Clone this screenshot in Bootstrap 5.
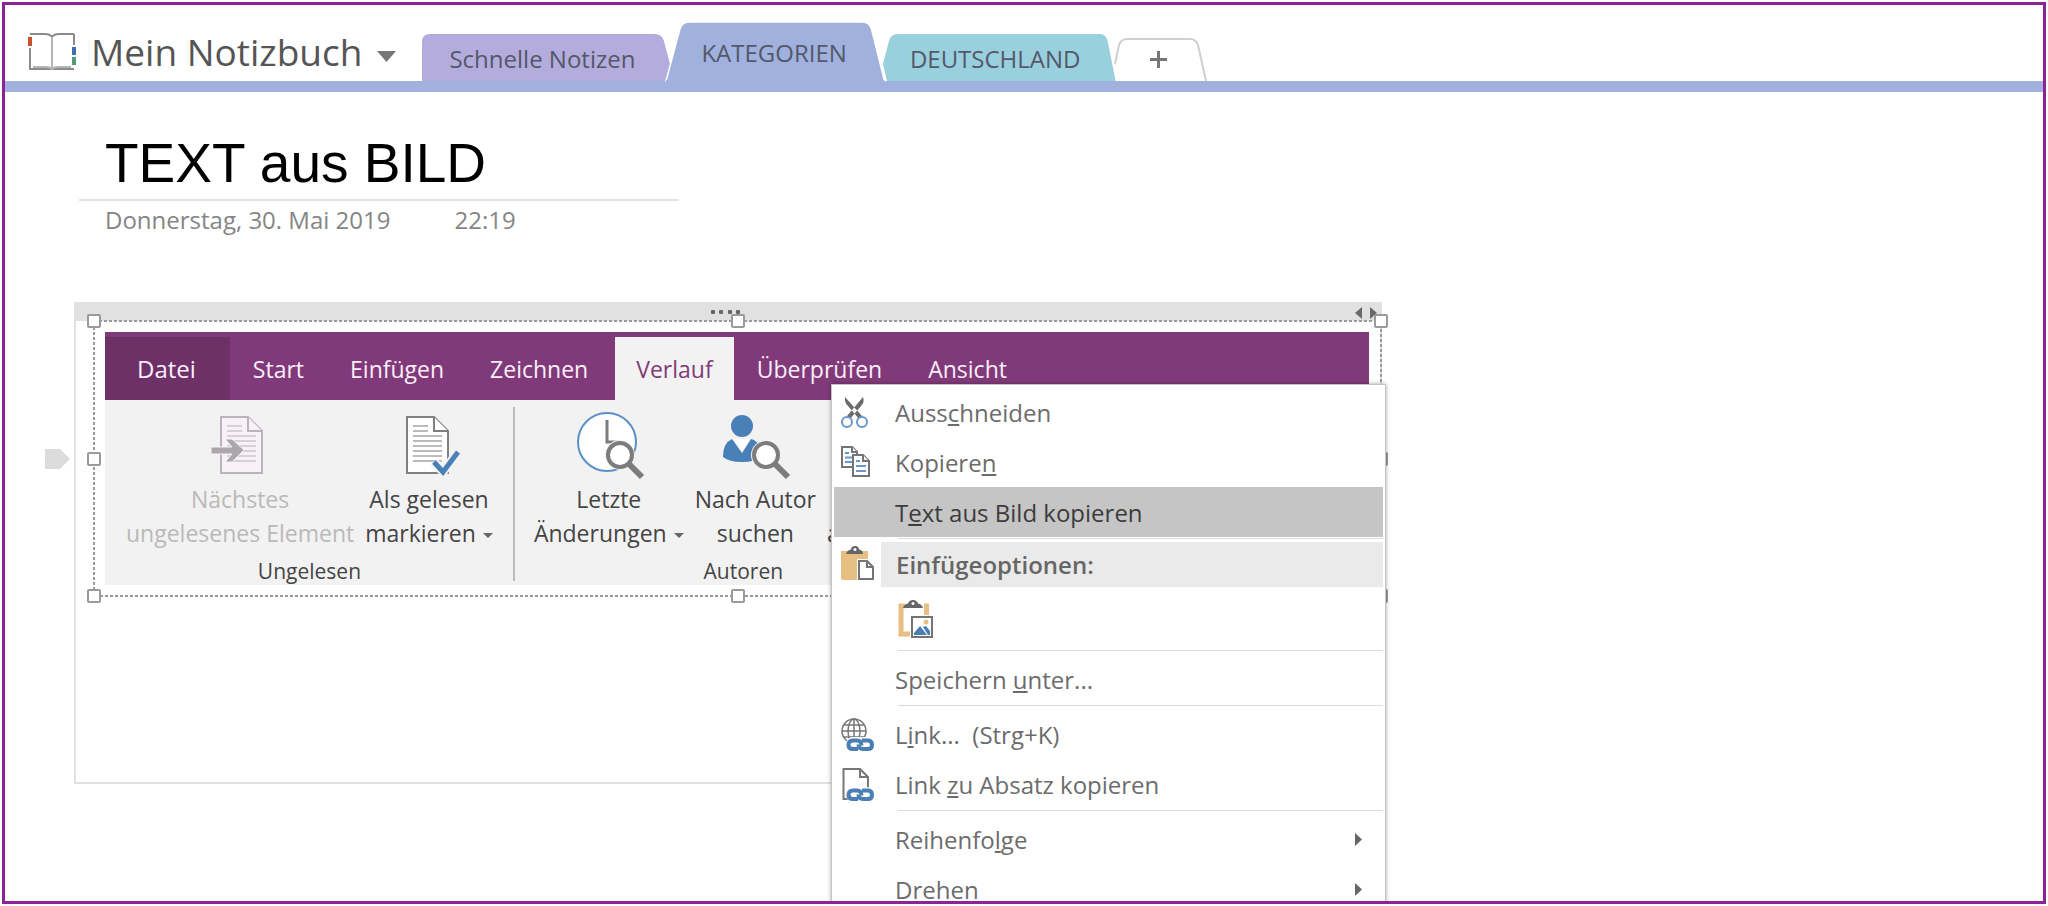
<!DOCTYPE html>
<html lang="de">
<head>
<meta charset="utf-8">
<meta name="viewport" content="width=device-width, initial-scale=1">
<title>Mein Notizbuch</title>
<link href="https://cdn.jsdelivr.net/npm/bootstrap@5.3.0/dist/css/bootstrap.min.css" rel="stylesheet">
<style>
body{background:#fff;font-family:"Open Sans","Noto Sans",sans-serif;font-size:24px;line-height:34px;color:#6a6a6a}
button{font:inherit;color:inherit;background:none;border:0;padding:0}
svg{display:block;overflow:visible}
.app-frame{height:calc(100vh - 4px);margin:2px;border:3px solid #8b2399;overflow:hidden}
.section-bar{height:87px;border-bottom:11px solid #a0b1de;padding-left:23px}
.notebook{height:58px;font-size:37px;color:#555;gap:15px}
.notebook .arrow{margin-top:8px}
.sections{margin-left:26px}
.section-tab{position:relative;height:47px;padding:3px 35px 0 27px;margin-right:-2px;color:#54586a}
.section-tab svg{position:absolute;left:0;top:0;width:100%;height:100%}
.section-tab span{position:relative}
.section-tab.current{height:59px;padding:3px 38px 0 35px;z-index:1;margin-left:-2px}
.section-tab.add{height:43px;padding:0 39px 0 36px}
.section-tab.add .plus{position:static;width:17px;height:17px}
.page-head{width:600px;max-width:100%;margin-left:74px;padding:39px 0 4px 26px;border-bottom:2px solid #e3e3e3}
.page-head h1{font:400 55px/64px "Liberation Sans",Arial,sans-serif;color:#000;margin:0}
.page-date{margin-left:100px;padding-top:1px;gap:64px;line-height:36px;color:#858585}
.note{position:relative;max-width:1308px;height:482px;margin:64px 0 0 69px;border:2px solid #e1e1e1;border-top:0}
.note-grip{position:relative;height:19px;margin:0 -2px;background:#e1e1e1}
.grip-dots{position:absolute;left:637px;top:8px}
.grip-arrows{position:absolute;right:5px;top:5px}
.para-mark{position:absolute;left:-31px;top:147px}
.picture{position:relative;margin:0 -1px 0 18px;padding:11px 12px 11px 11px}
.picture .outline{position:absolute;left:0;top:0;width:100%;height:100%}
.grab{position:absolute;width:14px;height:14px;background:#fff;border:2px solid #9a9a9a;border-radius:2px;transform:translate(-50%,-50%)}
.ribbon{font-size:23px;color:#444}
.ribbon-tabs{background:#813a79;padding-top:5px;color:#fbeffa}
.ribbon-tabs button{height:63px;padding:0 23px}
.ribbon-tabs .file{background:#6d3067;padding:0 34px 0 32px;font-size:24px}
.ribbon-tabs .active{background:#f2f2f2;color:#813a79;padding:0 21px;margin-left:4px}
.ribbon-body{background:#f2f2f2}
.ribbon-group{padding:13px 20px 0 21px}
.ribbon-group + .ribbon-group{position:relative}
.ribbon-group + .ribbon-group::before{content:"";position:absolute;left:0;top:7px;bottom:4px;width:2px;background:#bcbcbc}
.ribbon-group .tools{gap:11px}
.tool svg.pic{margin:0 auto 5px}
.tool:disabled{color:#b9b9b9}
.tri{display:inline-block;border:5px solid transparent;border-top-color:#666;border-bottom:0;vertical-align:middle;margin-left:7px}
.group-name{margin-top:8px;font-size:21px;line-height:27px;text-align:center}
.context{left:755px;top:82px;width:555px;--bs-dropdown-padding-y:2px;--bs-dropdown-padding-x:2px;--bs-dropdown-font-size:24px;--bs-dropdown-border-radius:0;--bs-dropdown-border-color:#c4c4c4;box-shadow:0 0 4px rgba(0,0,0,.35);background:#fff}
.context .dropdown-item{height:50px;padding:1px 21px 0 7px;color:#6c6c6c;display:flex;align-items:center}
.context .dropdown-item.active{background:#c5c5c5;color:#3c3c3c}
.context .slot{width:34px;height:34px;margin-right:20px;flex:none}
.context .sep{margin:0 0 0 64px;height:5px;border-top:1px solid transparent}
.context .sep::before{content:"";display:block;height:1px;background:#dadada}
.menu-title{height:45px;padding-left:7px}
.menu-title .slot{margin-top:4px}
.menu-title h2{margin:0 0 0 6px;height:45px;padding-left:15px;line-height:45px;font-size:24px;font-weight:600;background:#eaeaea;color:#666}
.paste-row{height:62px;padding:13px 0 0 64px}
</style>
</head>
<body>
<svg width="0" height="0" class="position-absolute" aria-hidden="true">
  <defs>
    <g id="lens">
      <path d="M52 51 L65 64" stroke="#f2f2f2" stroke-width="9"/>
      <circle cx="43" cy="42" r="15" fill="#f2f2f2"/>
      <path d="M52 51 L65 64" stroke="#7c7c7c" stroke-width="6"/>
      <circle cx="43" cy="42" r="12" fill="#fff" stroke="#7c7c7c" stroke-width="4"/>
    </g>
    <g id="chain" fill="none">
      <rect x="5" y="19" width="28" height="15" rx="7" fill="#fff"/>
      <path d="M17 31 H12 Q7.500 31 7.500 27 Q7.500 22.500 12 22.500 H16 Q20.500 22.500 20.500 27.500 M21 22.500 H27 Q31 22.500 31 27 Q31 31 27 31 H22 Q17.500 31 17.500 26.500" stroke="#4a7fb5" stroke-width="4"/>
    </g>
    <g id="sheet">
      <path d="M0 0 H27 L41 14 V56 H0 Z"/>
      <path d="M27 0 V14 H41" />
      <path d="M6 9 H21 M6 14 H21 M6 19 H35 M6 24 H35 M6 29 H35 M6 34 H35 M6 39 H35 M6 44 H35" stroke-width="1.500" opacity=".7"/>
    </g>
  </defs>
</svg>

<div class="app-frame">
  <header class="section-bar d-flex align-items-end">
    <button class="notebook d-flex align-items-center" type="button">
      <svg width="48" height="38" viewBox="0 0 48 38" fill="none" stroke="#8b8b8b" stroke-width="2">
        <path d="M2 1 H17 Q22 1 24 4 Q26 1 31 1 H46 M2 15 V36 H46 M46 1 V12"/>
        <path d="M24 4 V36 M5 34 H18 Q22 34 24 36 Q26 34 30 34 H43" stroke="#b5b5b5"/>
        <path d="M2 4 V13" stroke="#c8502d" stroke-width="4"/><path d="M46 14 V22" stroke="#3f6fb0" stroke-width="4"/><path d="M46 24 V32" stroke="#4b9c78" stroke-width="4"/>
      </svg>
      <span>Mein Notizbuch</span>
      <svg class="arrow" width="19" height="11" viewBox="0 0 19 11"><path d="M0 0H19L9.500 11Z" fill="#777"/></svg>
    </button>
    <nav class="sections d-flex align-items-end" aria-label="Abschnitte">
      <button class="section-tab" type="button"><svg viewBox="0 0 246 47" preserveAspectRatio="none"><path d="M0 47V8Q0 0 8 0H231Q238 0 240 7L246 30L242 47Z" fill="#b3acdc"/></svg><span>Schnelle Notizen</span></button>
      <button class="section-tab current" type="button"><svg viewBox="0 0 219 58" preserveAspectRatio="none"><path d="M0 58L14 7Q16 0 23 0H197Q204 0 206 7L219 58Z" fill="#a0b1de" stroke="#fff" stroke-width="1.500"/><path d="M0 57H219V59H0Z" fill="#a0b1de"/></svg><span>KATEGORIEN</span></button>
      <button class="section-tab" type="button"><svg viewBox="0 0 234 47" preserveAspectRatio="none"><path d="M4 47L0 30L6 7Q8 0 15 0H218Q224 0 226 7L234 47Z" fill="#99d0dd"/></svg><span>DEUTSCHLAND</span></button>
      <button class="section-tab add" type="button" aria-label="Neuer Abschnitt"><svg viewBox="0 0 92 43" preserveAspectRatio="none"><path d="M1 26L5 7Q7 1 13 1H76Q82 1 84 7L92 43" fill="none" stroke="#cfcfcf" stroke-width="2"/></svg><svg class="plus" viewBox="0 0 17 17"><path d="M8.500 0V17M0 8.500H17" stroke="#777" stroke-width="3"/></svg></button>
    </nav>
  </header>

  <main>
    <div class="page-head"><h1>TEXT aus BILD</h1></div>
    <div class="page-date d-flex"><span>Donnerstag, 30. Mai 2019</span><span>22:19</span></div>

    <section class="note">
      <div class="note-grip">
        <svg class="grip-dots" width="30" height="4" viewBox="0 0 30 4" fill="#666"><rect width="4" height="4" rx="1"/><rect x="8" width="4" height="4" rx="1"/><rect x="17" width="4" height="4" rx="1"/><rect x="25" width="4" height="4" rx="1"/></svg>
        <svg class="grip-arrows" width="22" height="12" viewBox="0 0 22 12" fill="#6a6a6a"><path d="M7 0V12L0 6Z"/><path d="M15 0V12L22 6Z"/></svg>
      </div>
      <svg class="para-mark" width="25" height="20" viewBox="0 0 25 20"><path d="M0 0H15L25 10L15 20H0Z" fill="#dcdcdc"/></svg>

      <div class="picture">
        <div class="ribbon">
          <div class="ribbon-tabs d-flex">
            <button class="file" type="button">Datei</button><button type="button">Start</button><button type="button">Einfügen</button><button type="button">Zeichnen</button><button class="active" type="button">Verlauf</button><button type="button">Überprüfen</button><button type="button">Ansicht</button>
          </div>
          <div class="ribbon-body d-flex">
            <div class="ribbon-group">
              <div class="tools d-flex">
                <button class="tool" type="button" disabled>
                  <svg class="pic" width="64" height="64" viewBox="0 0 64 64"><use href="#sheet" x="13" y="4" fill="#f8f1f8" stroke="#b9b5ba" stroke-width="2"/><path d="M3 34H24L17 26H24L36 37L24 49H17L24 41H3Z" fill="#aaa8aa" stroke="#f8f1f8" stroke-width="1"/></svg>
                  Nächstes<br>ungelesenes Element
                </button>
                <button class="tool" type="button">
                  <svg class="pic" width="64" height="64" viewBox="0 0 64 64" fill="none"><use href="#sheet" x="10" y="4" fill="#fff" stroke="#808080" stroke-width="2"/><path d="M37 49L46 59L61 39" stroke="#f2f2f2" stroke-width="9"/><path d="M37 49L46 59L61 39" stroke="#4a80b8" stroke-width="5"/></svg>
                  Als gelesen<br>markieren<i class="tri"></i>
                </button>
              </div>
              <div class="group-name">Ungelesen</div>
            </div>
            <div class="ribbon-group">
              <div class="tools d-flex">
                <button class="tool" type="button">
                  <svg class="pic" width="64" height="64" viewBox="0 0 64 64"><circle cx="30" cy="29" r="29" fill="#fff" stroke="#5b8fc7" stroke-width="2"/><path d="M30 7V29H42" fill="none" stroke="#7c7c7c" stroke-width="3"/><use href="#lens"/></svg>
                  Letzte<br>Änderungen<i class="tri"></i>
                </button>
                <button class="tool" type="button">
                  <svg class="pic" width="64" height="64" viewBox="0 0 64 64"><circle cx="19" cy="13" r="11" fill="#4a80b8"/><path d="M0 44Q0 30 9 26L19 40L28 26Q38 28 38 44Q32 49 19 49Q6 49 0 44Z" fill="#4a80b8"/><path d="M11 26L19 39L27 26Z" fill="#fff"/><use href="#lens"/></svg>
                  Nach Autor<br>suchen
                </button>
                <button class="tool" type="button">
                  <svg class="pic" width="64" height="64" viewBox="0 0 64 64"><circle cx="32" cy="13" r="11" fill="#4a80b8"/></svg>
                  Autoren<br>ausblenden
                </button>
              </div>
              <div class="group-name">Autoren</div>
            </div>
          </div>
        </div>
        <svg class="outline"><rect width="100%" height="100%" fill="none" stroke="#9a9a9a" stroke-width="2" stroke-dasharray="3 2"/></svg>
        <i class="grab start-0 top-0"></i><i class="grab start-50 top-0"></i><i class="grab start-100 top-0"></i>
        <i class="grab start-0 top-50"></i><i class="grab start-100 top-50"></i>
        <i class="grab start-0 top-100"></i><i class="grab start-50 top-100"></i><i class="grab start-100 top-100"></i>
      </div>

      <div class="dropdown-menu show context">
        <button class="dropdown-item" type="button"><svg class="slot" viewBox="0 0 34 34"><path d="M4 1Q3 6 7 10L18 23L21 20Z M22 1Q24 6 20 10L9 23L6 20Z" fill="#6b6b6b"/><circle cx="6" cy="26" r="5" fill="#fff" stroke="#6a97c9" stroke-width="2"/><circle cx="21" cy="26" r="5" fill="#fff" stroke="#6a97c9" stroke-width="2"/></svg><span>Auss<u>c</u>hneiden</span></button>
        <button class="dropdown-item" type="button"><svg class="slot" viewBox="0 0 34 34" fill="#fff" stroke="#747474" stroke-width="2"><path d="M1 1H11L16 6V21H1Z"/><path d="M11 1V6H16"/><path d="M4 7H8M4 11.500H11M4 16H11" stroke="#6a97c9"/><path d="M12 9H22L28 15V30H12Z"/><path d="M22 9V15H28"/><path d="M15 15H19M15 20H25M15 25H25" stroke="#6a97c9"/></svg><span>Kopiere<u>n</u></span></button>
        <button class="dropdown-item active" type="button"><span class="slot"></span><span>T<u>e</u>xt aus Bild kopieren</span></button>
        <div class="sep"></div>
        <div class="menu-title d-flex">
          <svg class="slot me-0" viewBox="0 0 34 34"><path d="M0 5H27V13H16V34H2Q0 34 0 32Z" fill="#e8bf82"/><path d="M5 8Q6 4 10 3.500Q10 0 14 0Q18 0 18 3.500Q22 4 22 8Z" fill="#666"/><circle cx="14" cy="3.500" r="1.500" fill="#fff"/><path d="M18 15H26L32 21V33H18Z M26 15V21H32" fill="#fff" stroke="#747474" stroke-width="2"/></svg>
          <h2 class="flex-fill">Einfügeoptionen:</h2>
        </div>
        <div class="paste-row"><button type="button" aria-label="Bild einfügen"><svg width="36" height="40" viewBox="0 0 36 40" fill="none"><path d="M7 6H3V34H12M26 6H28.500V15" stroke="#e8bf82" stroke-width="5"/><path d="M5 8Q6 4 10 3.500Q11 0 15 0Q19 0 20 3.500Q24 4 25 8Z" fill="#666"/><circle cx="15" cy="3.500" r="1.500" fill="#fff"/><path d="M14 17H34V37H14Z" fill="#fff" stroke="#747474" stroke-width="2"/><circle cx="28" cy="22" r="2.500" fill="#e8bf82"/><path d="M16 35V33L22 26L29 35Z M25 27L28 26L32 31V35H30Z" fill="#4a7fb5"/></svg></button></div>
        <div class="sep"></div>
        <button class="dropdown-item" type="button"><span class="slot"></span><span>Speichern <u>u</u>nter...</span></button>
        <div class="sep"></div>
        <button class="dropdown-item" type="button"><svg class="slot" viewBox="0 0 34 34"><g fill="none" stroke="#777" stroke-width="1.500"><circle cx="13" cy="13" r="12"/><ellipse cx="13" cy="13" rx="6" ry="12"/><path d="M13 1V25M1 13H25M3 7H23M3 19H23"/></g><use href="#chain"/></svg><span>L<u>i</u>nk...&nbsp; (Strg+K)</span></button>
        <button class="dropdown-item" type="button"><svg class="slot" viewBox="0 0 34 34"><path d="M8 31H2.500V1H19L27 9V21 M19 1V9H27" fill="none" stroke="#777" stroke-width="2"/><use href="#chain"/></svg><span>Link <u>z</u>u Absatz kopieren</span></button>
        <div class="sep"></div>
        <button class="dropdown-item" type="button"><span class="slot"></span><span class="flex-fill">Reihenfo<u>l</u>ge</span><svg width="7" height="13" viewBox="0 0 7 13"><path d="M0 0L7 6.500L0 13Z" fill="#666"/></svg></button>
        <button class="dropdown-item" type="button"><span class="slot"></span><span class="flex-fill">Drehen</span><svg width="7" height="13" viewBox="0 0 7 13"><path d="M0 0L7 6.500L0 13Z" fill="#666"/></svg></button>
      </div>
    </section>
  </main>
</div>
<script src="https://cdn.jsdelivr.net/npm/bootstrap@5.3.0/dist/js/bootstrap.bundle.min.js"></script>
</body>
</html>
